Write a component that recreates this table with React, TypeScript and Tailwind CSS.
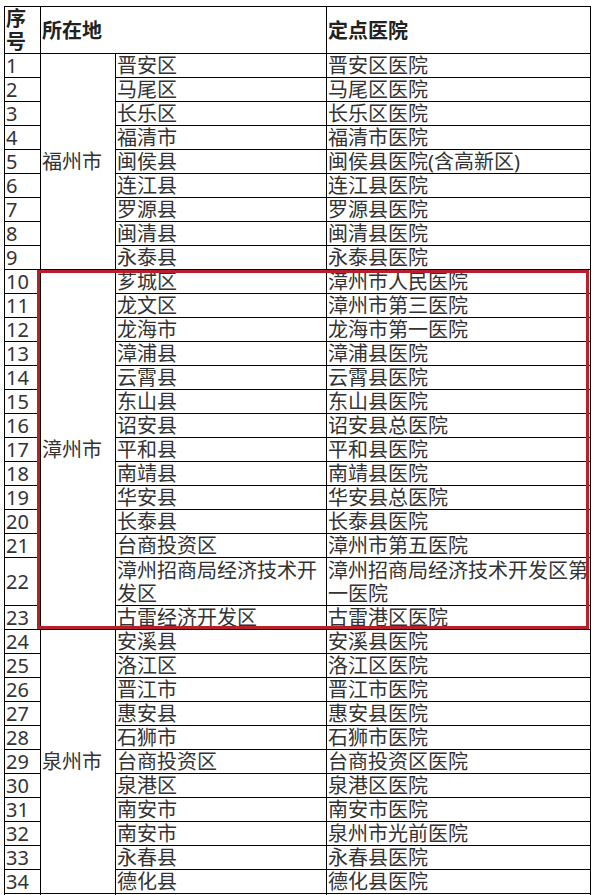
type Row = { no: number; district: string; hospital: string; tall?: boolean };

const cities: { name: string; rows: Row[] }[] = [
  {
    name: "福州市",
    rows: [
      { no: 1, district: "晋安区", hospital: "晋安区医院" },
      { no: 2, district: "马尾区", hospital: "马尾区医院" },
      { no: 3, district: "长乐区", hospital: "长乐区医院" },
      { no: 4, district: "福清市", hospital: "福清市医院" },
      { no: 5, district: "闽侯县", hospital: "闽侯县医院(含高新区)" },
      { no: 6, district: "连江县", hospital: "连江县医院" },
      { no: 7, district: "罗源县", hospital: "罗源县医院" },
      { no: 8, district: "闽清县", hospital: "闽清县医院" },
      { no: 9, district: "永泰县", hospital: "永泰县医院" },
    ],
  },
  {
    name: "漳州市",
    rows: [
      { no: 10, district: "芗城区", hospital: "漳州市人民医院" },
      { no: 11, district: "龙文区", hospital: "漳州市第三医院" },
      { no: 12, district: "龙海市", hospital: "龙海市第一医院" },
      { no: 13, district: "漳浦县", hospital: "漳浦县医院" },
      { no: 14, district: "云霄县", hospital: "云霄县医院" },
      { no: 15, district: "东山县", hospital: "东山县医院" },
      { no: 16, district: "诏安县", hospital: "诏安县总医院" },
      { no: 17, district: "平和县", hospital: "平和县医院" },
      { no: 18, district: "南靖县", hospital: "南靖县医院" },
      { no: 19, district: "华安县", hospital: "华安县总医院" },
      { no: 20, district: "长泰县", hospital: "长泰县医院" },
      { no: 21, district: "台商投资区", hospital: "漳州市第五医院" },
      { no: 22, district: "漳州招商局经济技术开发区", hospital: "漳州招商局经济技术开发区第一医院", tall: true },
      { no: 23, district: "古雷经济开发区", hospital: "古雷港区医院" },
    ],
  },
  {
    name: "泉州市",
    rows: [
      { no: 24, district: "安溪县", hospital: "安溪县医院" },
      { no: 25, district: "洛江区", hospital: "洛江区医院" },
      { no: 26, district: "晋江市", hospital: "晋江市医院" },
      { no: 27, district: "惠安县", hospital: "惠安县医院" },
      { no: 28, district: "石狮市", hospital: "石狮市医院" },
      { no: 29, district: "台商投资区", hospital: "台商投资区医院" },
      { no: 30, district: "泉港区", hospital: "泉港区医院" },
      { no: 31, district: "南安市", hospital: "南安市医院" },
      { no: 32, district: "南安市", hospital: "泉州市光前医院" },
      { no: 33, district: "永春县", hospital: "永春县医院" },
      { no: 34, district: "德化县", hospital: "德化县医院" },
    ],
  },
];

const cell = "border border-black p-0 pl-[1px] align-middle";

export default function App() {
  return (
    <div
      className="relative min-h-[895px] bg-white pt-[6px] pl-[4px] text-[20px] text-[#333]"
      style={{ fontFamily: '"Noto Sans", "Noto Sans CJK SC", sans-serif' }}
    >
      <table className="w-[587px] table-fixed border-collapse leading-[23px]">
        <colgroup>
          <col className="w-[36px]" />
          <col className="w-[75px]" />
          <col className="w-[211px]" />
          <col className="w-[264px]" />
        </colgroup>
        <thead>
          <tr className="font-bold text-[#222]">
            <th className={`${cell} text-left`}>
              序<br />号
            </th>
            <th colSpan={2} className={`${cell} text-left`}>
              所在地
            </th>
            <th className={`${cell} text-left`}>定点医院</th>
          </tr>
        </thead>
        <tbody>
          {cities.map((city) =>
            city.rows.map((r, i) => (
              <tr key={r.no} className={r.tall ? "h-[48px]" : ""}>
                <td className={cell}>{r.no}</td>
                {i === 0 && (
                  <td rowSpan={city.rows.length} className={cell}>
                    {city.name}
                  </td>
                )}
                <td className={cell}>{r.district}</td>
                <td className={cell}>{r.hospital}</td>
              </tr>
            ))
          )}
          <tr>
            <td className={cell}>&nbsp;</td>
            <td className={cell}></td>
            <td className={cell}></td>
            <td className={cell}></td>
          </tr>
        </tbody>
      </table>

      {/* red highlight around 漳州市 */}
      <div className="pointer-events-none absolute left-[37px] top-[270px] h-[359px] w-[552px] border-[3px] border-[#b81f2b]" />
    </div>
  );
}
